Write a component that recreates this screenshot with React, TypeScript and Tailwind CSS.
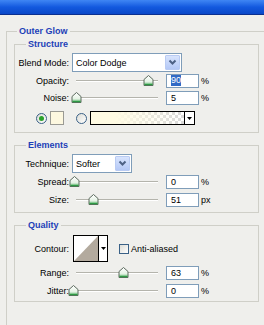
import React from 'react'

const font = "font-['Liberation_Sans',Arial,sans-serif]"

function Chevron() {
    return (
        <svg width="9" height="7" viewBox="0 0 9 7" aria-hidden="true">
            <path d="M1.5 1.5 L4.5 4.5 L7.5 1.5" fill="none" stroke="#4d6185" strokeWidth="2" />
        </svg>
    )
}

function Combo({ text, width }: { text: string; width: string }) {
    return (
        <div className={`${width} h-[19px] flex items-stretch border border-[#7f9db9] bg-white`}>
            <span className="flex-1 pl-[3px] flex items-center text-black">{text}</span>
            <span className="w-[15px] m-[1px] flex items-center justify-center bg-gradient-to-b from-[#d8e4fd] to-[#b4c8f6] border border-[#b9cbf3] rounded-[1px]">
                <Chevron />
            </span>
        </div>
    )
}

function Thumb() {
    return (
        <svg width="11" height="11" viewBox="0 0 11 11" aria-hidden="true">
            <defs>
                <linearGradient id="tg" x1="0" y1="0" x2="0" y2="1">
                    <stop offset="0" stopColor="#ffffff" />
                    <stop offset="0.6" stopColor="#e6f3e6" />
                    <stop offset="1" stopColor="#6cc07a" />
                </linearGradient>
            </defs>
            <path d="M5.5 0.5 L10 4.5 V10.5 H1 V4.5 Z" fill="url(#tg)" stroke="#5c6a5e" strokeWidth="1" />
            <path d="M1.5 9.5 H9.5" stroke="#2f9a45" strokeWidth="1.5" />
        </svg>
    )
}

function SliderRow({ label, value, unit, pos, selected, className }: {
    label: string; value: string; unit: string; pos: number; selected?: boolean; className?: string
}) {
    return (
        <div className={`flex items-center h-[13px] ${className ?? ''}`}>
            <span className="w-[54px] text-right">{label}</span>
            <div className="relative w-[94px] h-full flex items-center pl-[4px] pr-[8px] ml-[3px]">
                <div className="flex-1 h-[2px] border-t border-[#b4b4ac] bg-white" />
                <div className="absolute top-[1px]" style={{ left: pos - 5 }}>
                    <Thumb />
                </div>
            </div>
            <div className="w-[33px] h-[14px] border border-[#7f9db9] bg-white flex items-center pl-[4px]">
                {selected ? (
                    <span className="bg-[#316ac5] text-white leading-[11px] px-[0px]">{value}</span>
                ) : (
                    <span>{value}</span>
                )}
            </div>
            <span className="ml-[2px]">{unit}</span>
        </div>
    )
}

function Radio({ checked }: { checked?: boolean }) {
    return (
        <span className="w-[11px] h-[11px] rounded-full border border-[#3a6187] bg-gradient-to-br from-[#dcdcd6] to-white flex items-center justify-center">
            {checked && <span className="w-[5px] h-[5px] rounded-full bg-[#2ba22b]" />}
        </span>
    )
}

function Group({ title, children, className }: { title: string; children: React.ReactNode; className?: string }) {
    return (
        <fieldset className={`w-[245px] border border-[#cfcfc8] pb-0 ${className ?? ''}`}>
            <legend className="ml-[11px] px-[2px] font-bold text-[#1d3fb8] leading-[12px]">{title}</legend>
            {children}
        </fieldset>
    )
}

export default function App() {
    return (
        <div className={`${font} text-[9px] leading-[12px] text-black bg-[#efefec] w-[264px] h-[325px] overflow-hidden`}>
            <div className="h-[15px] bg-gradient-to-b from-[#3f86f4] via-[#1359df] to-[#0a48c8] border-b border-[#0a2f8f]" />

            <fieldset className="ml-[6px] mt-[10px] w-[300px] h-[320px] border-l border-t border-[#cfcfc8]">
                <legend className="ml-[10px] px-[2px] font-bold text-[#1d3fb8] leading-[12px]">Outer Glow</legend>

                <Group title="Structure" className="ml-[7px] mt-[1px]">
                    <div className="flex items-center mt-[3px]">
                        <span className="w-[54px] text-right">Blend Mode:</span>
                        <div className="ml-[3px]">
                            <Combo text="Color Dodge" width="w-[110px]" />
                        </div>
                    </div>
                    <SliderRow label="Opacity:" value="90" unit="%" pos={76} selected className="mt-[2px]" />
                    <SliderRow label="Noise:" value="5" unit="%" pos={4} className="mt-[4px]" />
                    <div className="flex items-center h-[14px] mt-[7px] mb-[7px] pl-[21px]">
                        <Radio checked />
                        <span className="ml-[3px] w-[14px] h-[14px] border border-[#9a9a94] bg-[#fdf8e0]" />
                        <span className="ml-[12px]"><Radio /></span>
                        <div className="ml-[3px] flex h-[14px] border border-black">
                            <span className="w-[93px] h-full bg-[linear-gradient(to_right,#fffbe3_25%,rgba(255,251,227,0))_,repeating-conic-gradient(#d9d9d9_0_25%,#ffffff_0_50%)] bg-[length:100%_100%,6px_6px]" />
                            <span className="w-[10px] h-full border-l border-black bg-white flex items-center justify-center">
                                <svg width="5" height="3" viewBox="0 0 5 3" aria-hidden="true"><path d="M0 0 H5 L2.5 3 Z" fill="#000" /></svg>
                            </span>
                        </div>
                    </div>
                </Group>

                <Group title="Elements" className="ml-[7px] mt-[6px]">
                    <div className="flex items-center mt-[3px]">
                        <span className="w-[54px] text-right">Technique:</span>
                        <div className="ml-[3px]">
                            <Combo text="Softer" width="w-[60px]" />
                        </div>
                    </div>
                    <SliderRow label="Spread:" value="0" unit="%" pos={2} className="mt-[2px]" />
                    <SliderRow label="Size:" value="51" unit="px" pos={21} className="mt-[5px] mb-[6px]" />
                </Group>

                <Group title="Quality" className="ml-[7px] mt-[6px]">
                    <div className="flex items-center mt-[4px]">
                        <span className="w-[54px] text-right">Contour:</span>
                        <div className="ml-[4px] w-[35px] h-[27px] border border-black bg-white flex">
                            <svg width="24" height="25" viewBox="0 0 24 25" aria-hidden="true">
                                <path d="M0 25 L24 0 V25 Z" fill="#b3aa9e" />
                            </svg>
                            <span className="flex-1 border-l border-black flex items-center justify-center">
                                <svg width="5" height="3" viewBox="0 0 5 3" aria-hidden="true"><path d="M0 0 H5 L2.5 3 Z" fill="#000" /></svg>
                            </span>
                        </div>
                        <span className="ml-[11px] w-[10px] h-[10px] border border-[#3a6187] bg-gradient-to-br from-[#dcdcd6] to-white" />
                        <span className="ml-[2px]">Anti-aliased</span>
                    </div>
                    <SliderRow label="Range:" value="63" unit="%" pos={51} className="mt-[4px]" />
                    <SliderRow label="Jitter:" value="0" unit="%" pos={1} className="mt-[5px] mb-[4px]" />
                </Group>
            </fieldset>
        </div>
    )
}
